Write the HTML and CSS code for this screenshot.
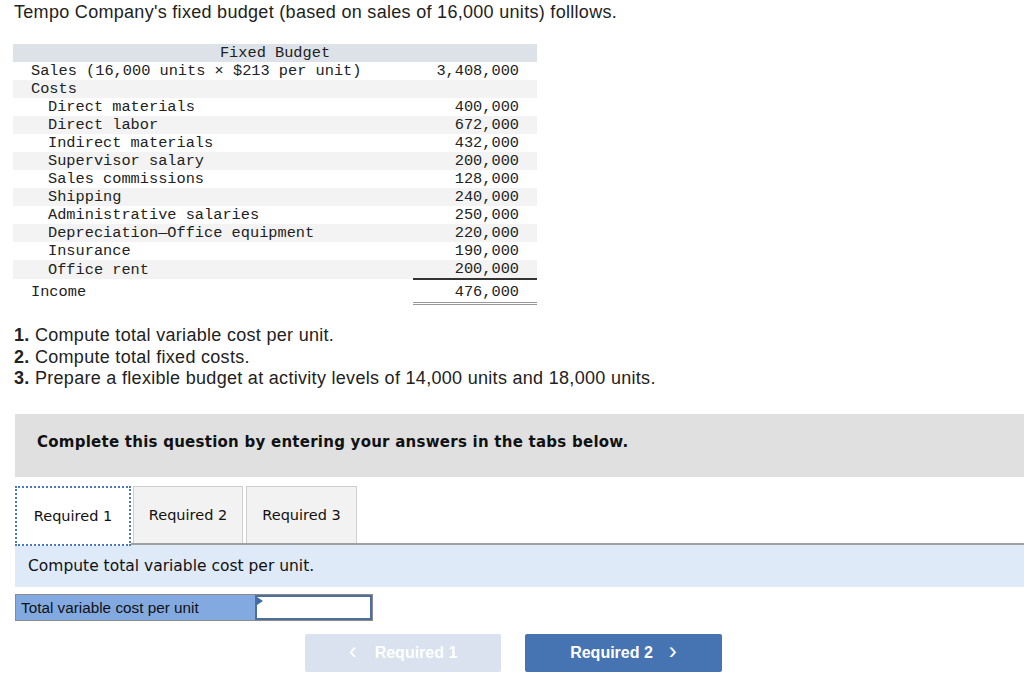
FILE: index.html
```html
<!DOCTYPE html>
<html>
<head>
<meta charset="utf-8">
<link rel="stylesheet" href="styles.css">
</head>
<body>
<p class="intro">Tempo Company's fixed budget (based on sales of 16,000 units) folllows.</p>
<table class="budget">
  <colgroup><col class="c-lbl"><col class="c-num"></colgroup>
  <tr class="hdr"><td colspan="2" class="hdr-title">Fixed Budget</td></tr>
  <tr class="r-white"><td class="lbl l1">Sales (16,000 units × $213 per unit)</td><td class="num">3,408,000</td></tr>
  <tr class="r-gray"><td class="lbl l1">Costs</td><td class="num"></td></tr>
  <tr class="r-white"><td class="lbl l2">Direct materials</td><td class="num">400,000</td></tr>
  <tr class="r-gray"><td class="lbl l2">Direct labor</td><td class="num">672,000</td></tr>
  <tr class="r-white"><td class="lbl l2">Indirect materials</td><td class="num">432,000</td></tr>
  <tr class="r-gray"><td class="lbl l2">Supervisor salary</td><td class="num">200,000</td></tr>
  <tr class="r-white"><td class="lbl l2">Sales commissions</td><td class="num">128,000</td></tr>
  <tr class="r-gray"><td class="lbl l2">Shipping</td><td class="num">240,000</td></tr>
  <tr class="r-white"><td class="lbl l2">Administrative salaries</td><td class="num">250,000</td></tr>
  <tr class="r-gray"><td class="lbl l2">Depreciation—Office equipment</td><td class="num">220,000</td></tr>
  <tr class="r-white"><td class="lbl l2">Insurance</td><td class="num">190,000</td></tr>
  <tr class="r-gray"><td class="lbl l2">Office rent</td><td class="num underline">200,000</td></tr>
  <tr class="r-white income"><td class="lbl l1">Income</td><td class="num dbl">476,000</td></tr>
</table>

<ol class="tasks">
  <li><b>1.</b> Compute total variable cost per unit.</li>
  <li><b>2.</b> Compute total fixed costs.</li>
  <li><b>3.</b> Prepare a flexible budget at activity levels of 14,000 units and 18,000 units.</li>
</ol>

<div class="band">Complete this question by entering your answers in the tabs below.</div>

<div class="tabs">
  <div class="tab active">Required 1</div>
  <div class="tab">Required 2</div>
  <div class="tab">Required 3</div>
</div>
<div class="prompt">Compute total variable cost per unit.</div>

<div class="answer">
  <div class="answer-label">Total variable cost per unit</div>
  <div class="answer-input"><span class="flag"></span></div>
</div>

<div class="nav">
  <div class="btn prev"><span class="chev">&lsaquo;</span> Required 1</div>
  <div class="btn next">Required 2 <span class="chev">&rsaquo;</span></div>
</div>
</body>
</html>
```

FILE: styles.css
```css
html, body {
  margin: 0;
  padding: 0;
  background: #fff;
  color: #1a1a1a;
}
body {
  font-family: "Liberation Sans", Arial, sans-serif;
}
.intro {
  margin: 0;
  padding: 1px 0 0 14px;
  height: 44px;
  box-sizing: border-box;
  font-family: "Liberation Sans", Arial, sans-serif;
  font-size: 18px;
  letter-spacing: 0.3px;
  line-height: 22px;
  color: #222;
}
.budget {
  margin-left: 13px;
  border-collapse: collapse;
  table-layout: fixed;
  width: 524px;
  font-family: "Liberation Mono", "Courier New", monospace;
  font-size: 15.3px;
  color: #222;
}
.c-lbl { width: 400px; }
.c-num { width: 124px; }
.budget td {
  padding: 0;
  height: 18px;
  line-height: 18px;
  white-space: nowrap;
}
.hdr td { background: #dde1e8; }
.hdr-title { text-align: center; }
.r-gray td { background: #f3f3f3; }
.r-white td { background: #fff; }
.l1 { padding-left: 18px !important; }
.l2 { padding-left: 35px !important; }
.num {
  text-align: right;
  padding-right: 18px !important;
}
.num.underline { border-bottom: 2px solid #333; }
.budget .income td { height: 20px; line-height: 20px; padding-top: 2px; }
.num.dbl { border-bottom: 3px double #999; }
.tasks {
  list-style: none;
  margin: 0;
  padding: 20px 0 0 14px;
  font-family: "Liberation Sans", Arial, sans-serif;
  font-size: 18px;
  letter-spacing: 0.3px;
  line-height: 21.5px;
  color: #222;
}
.tasks b { font-weight: 700; }
.band {
  margin: 24px 0 0 15px;
  height: 63px;
  box-sizing: border-box;
  padding: 0 0 6px 22px;
  background: #e0e0e0;
  display: flex;
  align-items: center;
  font-family: "DejaVu Sans", Verdana, sans-serif;
  font-weight: bold;
  font-size: 15px;
  letter-spacing: 0.25px;
  color: #111;
}
.tabs {
  display: flex;
  gap: 2px;
  margin: 9px 0 0 15px;
  border-bottom: 2px solid #a0a0a0;
  height: 57px;
}
.tab {
  width: 110px;
  height: 57px;
  box-sizing: border-box;
  background: #f2f2f2;
  border: 1px solid #cfcfcf;
  border-bottom: none;
  display: flex;
  align-items: center;
  justify-content: center;
  font-family: "DejaVu Sans", Verdana, sans-serif;
  font-size: 14.5px;
  color: #111;
}
.tab:last-child { width: 111px; margin-left: 1px; }
.tab.active {
  width: 116px;
  background: #fff;
  border: 2px dotted #4a78c2;
  height: 60px;
  margin-bottom: -3px;
  position: relative;
  z-index: 1;
}
.prompt {
  margin-left: 15px;
  height: 42px;
  background: #deeaf7;
  display: flex;
  align-items: center;
  padding-left: 13px;
  font-family: "DejaVu Sans", Verdana, sans-serif;
  font-size: 15.5px;
  color: #111;
}
.answer {
  display: flex;
  margin: 7px 0 0 15px;
  width: 358px;
  height: 27px;
  border: 1px solid #8a8a8a;
  box-sizing: border-box;
}
.answer-label {
  width: 239px;
  background: #83aae0;
  font-family: "Liberation Sans", Arial, sans-serif;
  font-size: 15.3px;
  line-height: 25px;
  padding-left: 5px;
  box-sizing: border-box;
  color: #111;
}
.answer-input {
  flex: 1;
  background: #fff;
  border: 2px solid #4d6f9e;
  position: relative;
}
.flag {
  position: absolute;
  left: 0;
  top: 0;
  width: 0;
  height: 0;
  border-top: 4px solid transparent;
  border-bottom: 4px solid transparent;
  border-left: 6px solid #3d6bb0;
}
.nav {
  display: flex;
  gap: 24px;
  margin: 13px 0 0 305px;
}
.btn {
  width: 196px;
  height: 38px;
  border-radius: 2px;
  display: flex;
  align-items: center;
  justify-content: center;
  font-family: "Liberation Sans", Arial, sans-serif;
  font-weight: bold;
  font-size: 16px;
  color: #fff;
  box-sizing: border-box;
}
.btn .chev { font-weight: normal; font-size: 24px; line-height: 1; margin: -3px 0 0; }
.prev { background: #d9e2ee; }
.prev .chev { margin-right: 18px; }
.next { background: #4674b3; width: 197px; }
.next .chev { margin-left: 16px; }
```
